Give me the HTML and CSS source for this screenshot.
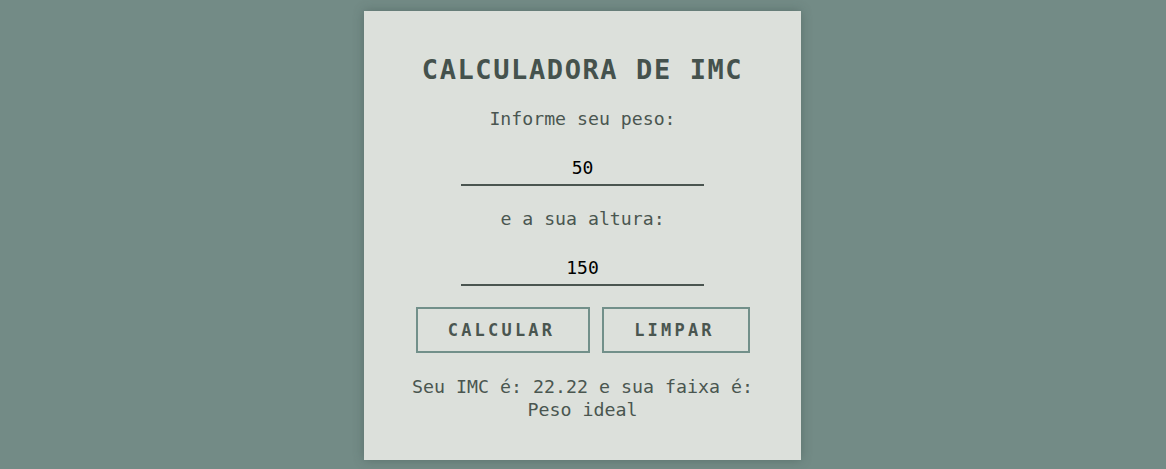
FILE: index.html
```html
<!DOCTYPE html>
<html lang="pt-BR">
<head>
<meta charset="UTF-8">
<title>Calculadora de IMC</title>
<link rel="stylesheet" href="styles.css">
</head>
<body>
  <main class="card">
    <h1 class="title">CALCULADORA DE IMC</h1>
    <label class="label" for="peso">Informe seu peso:</label>
    <input class="field" id="peso" type="text" value="50">
    <label class="label" for="altura">e a sua altura:</label>
    <input class="field" id="altura" type="text" value="150">
    <div class="actions">
      <button class="btn btn-calc" type="button">CALCULAR</button>
      <button class="btn btn-clear" type="button">LIMPAR</button>
    </div>
    <p class="result">Seu IMC é: 22.22 e sua faixa é: Peso ideal</p>
  </main>
</body>
</html>
```
FILE: styles.css
```css
html, body {
  margin: 0;
  padding: 0;
}
body {
  background: #738b86;
  font-family: "DejaVu Sans Mono", "Liberation Mono", monospace;
  color: #4a5650;
  display: flex;
  justify-content: center;
  align-items: flex-start;
  padding: 11px 1px 0 0;
  min-height: 469px;
  box-sizing: border-box;
}
.card {
  width: 437px;
  height: 449px;
  box-sizing: border-box;
  background: #dce0db;
  box-shadow: 0 0 10px rgba(60, 80, 75, 0.45);
  padding: 43px 36px 0;
  display: flex;
  flex-direction: column;
  align-items: center;
  gap: 22px;
}
.title {
  margin: 0;
  font-size: 27px;
  line-height: 32px;
  font-weight: bold;
  letter-spacing: 1.6px;
  color: #45524d;
}
.label {
  font-size: 18.2px;
  line-height: 22px;
  color: #4a5650;
}
.field {
  width: 243px;
  height: 34px;
  box-sizing: border-box;
  border: none;
  border-bottom: 2px solid #4a5550;
  background: transparent;
  text-align: center;
  font-family: "DejaVu Sans Mono", "Liberation Mono", monospace;
  font-size: 18px;
  color: #000;
  padding: 0 0 1px;
  outline: none;
}
.actions {
  display: flex;
  gap: 12px;
  margin-top: -1px;
}
.btn {
  height: 46px;
  box-sizing: border-box;
  border: 2px solid #72908a;
  background: transparent;
  font-family: "DejaVu Sans Mono", "Liberation Mono", monospace;
  font-size: 17px;
  font-weight: bold;
  letter-spacing: 3.2px;
  color: #4a5650;
  padding: 0 2px 0 0;
}
.btn-calc {
  width: 174px;
}
.btn-clear {
  width: 148px;
}
.result {
  margin: 0;
  font-size: 18.3px;
  line-height: 23px;
  text-align: center;
  color: #4a5650;
}
```
